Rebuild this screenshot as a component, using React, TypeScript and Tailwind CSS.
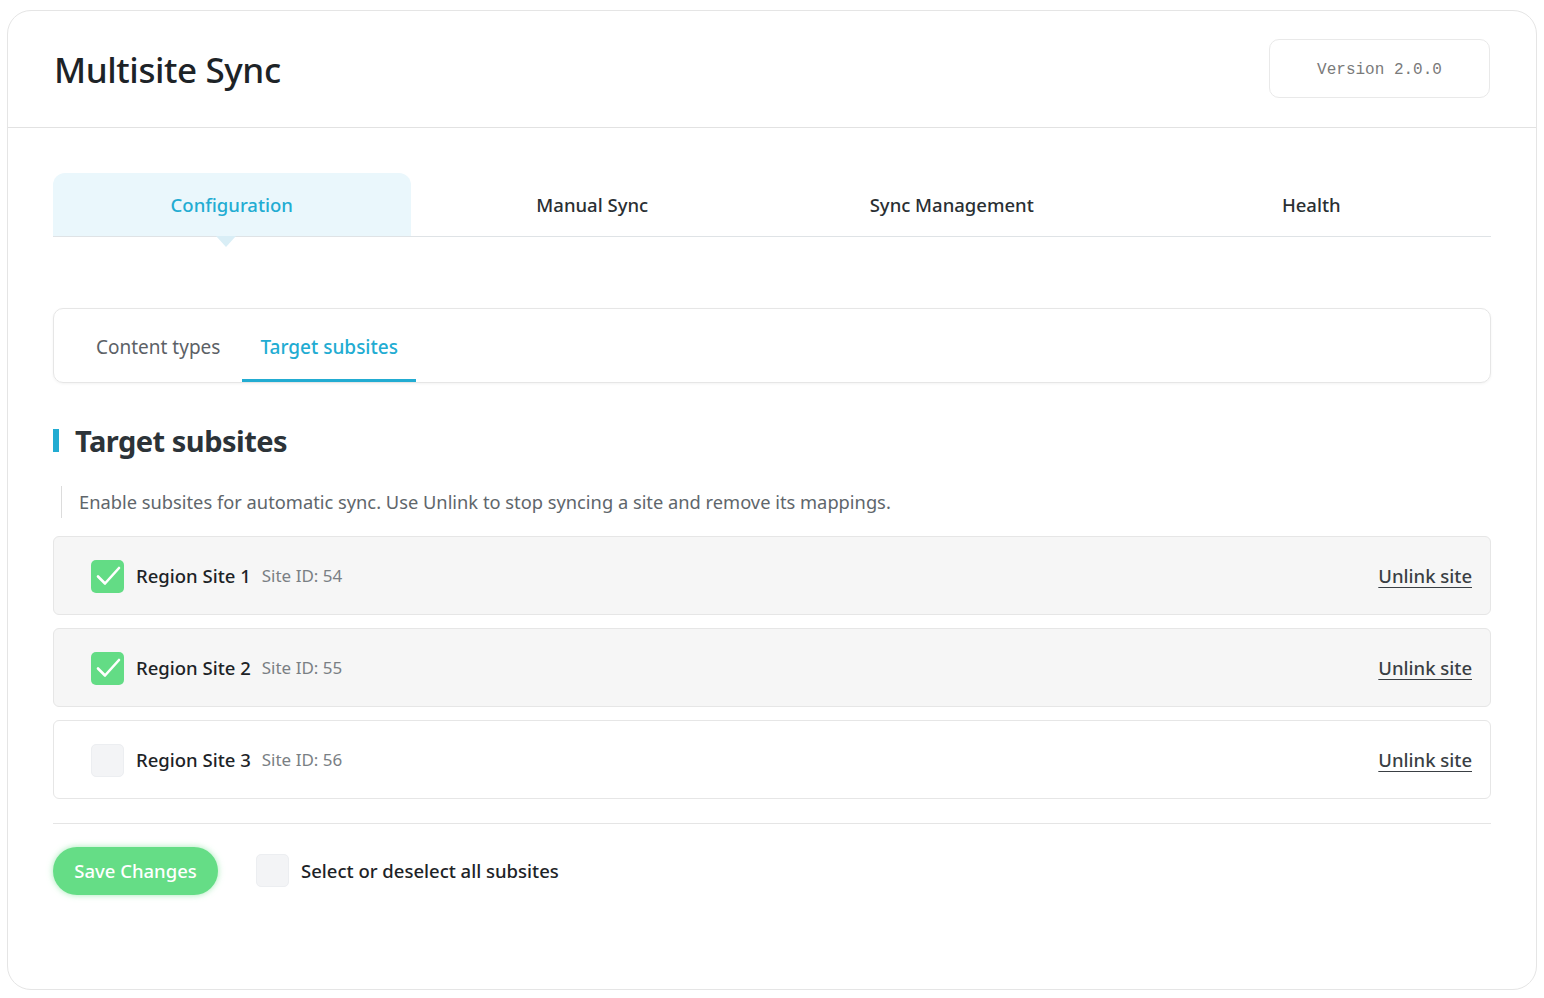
import React from "react";

const sites = [
  { name: "Region Site 1", id: 54, checked: true },
  { name: "Region Site 2", id: 55, checked: true },
  { name: "Region Site 3", id: 56, checked: false },
];

function Check({ checked }: { checked: boolean }) {
  if (!checked) {
    return <div className="w-[33px] h-[33px] rounded-[5px] bg-[#f3f4f6] border border-[#eceef1]" />;
  }
  return (
    <div className="w-[33px] h-[33px] rounded-[5px] bg-[#63dc85] flex items-center justify-center">
      <svg width="28" height="28" viewBox="0 0 28 28" fill="none">
        <path d="M4 14.5l7 7L25 6" stroke="white" strokeWidth="2.6" strokeLinecap="round" strokeLinejoin="round" />
      </svg>
    </div>
  );
}

export default function App() {
  return (
    <div className="w-[1544px] h-[998px] bg-white pt-[10px] pl-[7px] font-['Noto_Sans',sans-serif]">
      <div className="w-[1530px] h-[980px] rounded-[24px] border border-[#e5e5e5] bg-white">
        {/* Header */}
        <div className="h-[117px] flex items-center justify-between px-[46px] border-b border-[#e2e2e2]">
          <h1 className="text-[35px] text-[#1d2327] font-medium tracking-[-0.4px] mt-[3px]">Multisite Sync</h1>
          <div className="w-[221px] h-[59px] mt-[-1px] rounded-[10px] border border-[#e9e9e9] flex items-center justify-center pt-[3px] font-['Liberation_Mono',monospace] text-[16px] text-[#7a7a7a]">
            Version 2.0.0
          </div>
        </div>

        <div className="px-[45px] pt-[45px]">
          {/* Main tabs */}
          <div className="grid grid-cols-4 border-b border-[#dfe3e6] h-[64px]">
            <div className="relative bg-[#eaf7fc] rounded-t-[12px] mr-[2px] flex items-center justify-center text-[18.5px] text-[#22acd2] font-medium pt-[1px]">
              Configuration
              <div className="absolute left-[163px] bottom-[-11px] w-0 h-0 border-l-[10px] border-r-[10px] border-t-[11px] border-l-transparent border-r-transparent border-t-[#d9eef6]" />
            </div>
            <div className="flex items-center justify-center text-[18.5px] text-[#2a2f33] font-medium pt-[1px]">Manual Sync</div>
            <div className="flex items-center justify-center text-[18.5px] text-[#2a2f33] font-medium pt-[1px]">Sync Management</div>
            <div className="flex items-center justify-center text-[18.5px] text-[#2a2f33] font-medium pt-[1px]">Health</div>
          </div>

          {/* Sub tabs */}
          <div className="mt-[71px] h-[75px] rounded-[10px] border border-[#e6e6e6] shadow-[0_1px_3px_rgba(0,0,0,0.05)] flex items-stretch pl-[20px]">
            <div className="px-[22px] flex items-center text-[19px] text-[#5c6166] pt-[3px]">Content types</div>
            <div className="px-[18px] flex items-center text-[19px] text-[#22acd2] font-medium border-b-[3px] border-[#22acd2] pt-[6px]">Target subsites</div>
          </div>

          {/* Section heading */}
          <div className="mt-[36px] flex items-center">
            <div className="w-[6px] h-[23px] bg-[#22acd2]" />
            <h2 className="ml-[16px] text-[29px] font-bold text-[#2c3338] tracking-[-0.5px]">Target subsites</h2>
          </div>
          <div className="mt-[23px] ml-[8px] border-l border-[#dcdcdc] pl-[17px] h-[32px] flex items-center text-[18.3px] text-[#60666b]">
            Enable subsites for automatic sync. Use Unlink to stop syncing a site and remove its mappings.
          </div>

          {/* Sites */}
          <div className="mt-[18px] flex flex-col gap-[13px]">
            {sites.map((s) => (
              <div
                key={s.id}
                className={
                  s.checked
                    ? "h-[79px] rounded-[6px] border border-[#e6e6e6] bg-[#f6f6f6] flex items-center pl-[37px] pr-[18px] pt-[2px]"
                    : "h-[79px] rounded-[6px] border border-[#e6e6e6] bg-white flex items-center pl-[37px] pr-[18px] pt-[2px]"
                }
              >
                <Check checked={s.checked} />
                <span className="ml-[12px] text-[18.5px] font-medium text-[#1d2327]">{s.name}</span>
                <span className="ml-[11px] text-[17px] text-[#7a7f84]">Site ID: {s.id}</span>
                <a className="ml-auto text-[18.5px] font-medium text-[#3a3f44] underline underline-offset-[4px]">Unlink site</a>
              </div>
            ))}
          </div>

          {/* Footer actions */}
          <div className="mt-[24px] border-t border-[#e5e5e5] pt-[23px] flex items-center">
            <button className="w-[165px] h-[48px] rounded-full bg-[#65dd86] text-white text-[18.5px] font-medium shadow-[0_0_6px_rgba(101,221,134,0.6)]">
              Save Changes
            </button>
            <div className="ml-[38px]">
              <Check checked={false} />
            </div>
            <span className="ml-[12px] text-[18.5px] font-medium text-[#1d2327]">Select or deselect all subsites</span>
          </div>
        </div>
      </div>
    </div>
  );
}
